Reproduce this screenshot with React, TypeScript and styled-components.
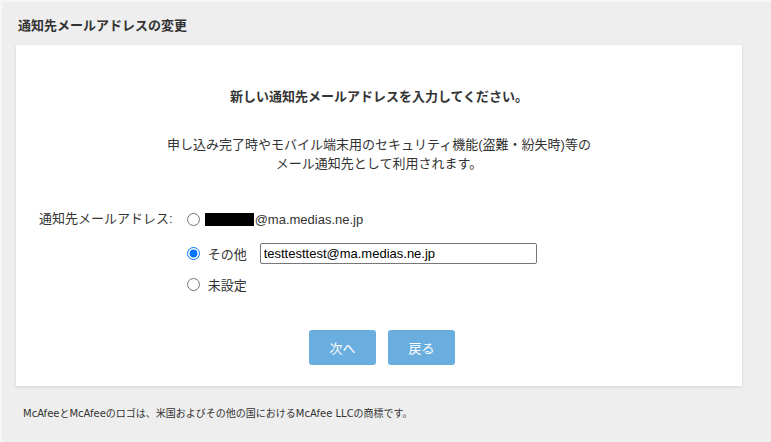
import styled, { createGlobalStyle } from "styled-components";

const GlobalStyle = createGlobalStyle`
  html, body {
    margin: 0;
    padding: 0;
    background: #eeeeee;
  }
  body {
    font-family: "Liberation Sans", "Noto Sans CJK JP", sans-serif;
    color: #333333;
  }
`;

const Page = styled.div`
  width: 771px;
  height: 442px;
  box-sizing: border-box;
  border-top: 2px solid #f6f6f6;
  border-left: 2px solid #f6f6f6;
  padding: 15px 29px 0 14px;
  display: flex;
  flex-direction: column;
`;

const Title = styled.h1`
  margin: 0 0 0 2px;
  height: 28px;
  font-size: 13px;
  font-weight: bold;
  line-height: 18px;
  color: #333;
`;

const Card = styled.div`
  background: #ffffff;
  height: 341px;
  box-sizing: border-box;
  box-shadow: 0 1px 3px rgba(0, 0, 0, 0.12);
  padding: 43px 0 0;
  display: flex;
  flex-direction: column;
  align-items: center;
`;

const Heading = styled.p`
  margin: 0;
  font-size: 13px;
  font-weight: bold;
  line-height: 18px;
`;

const Description = styled.p`
  margin: 29px 0 0;
  font-size: 13px;
  line-height: 19px;
  text-align: center;
`;

const Form = styled.div`
  align-self: stretch;
  margin-top: 36px;
  padding-left: 23px;
  display: grid;
  grid-template-columns: auto 1fr;
  column-gap: 14px;
`;

const Label = styled.div`
  font-size: 13px;
  line-height: 20px;
  height: 20px;
  text-align: right;
`;

const Options = styled.div`
  display: flex;
  flex-direction: column;
  gap: 11px;
`;

const Option = styled.label<{ $gap?: number; $top?: number }>`
  display: flex;
  align-items: center;
  height: 20px;
  font-size: 13px;
  gap: ${(p) => p.$gap ?? 8}px;
  margin-top: ${(p) => p.$top ?? 0}px;
`;

const Radio = styled.input`
  margin: 0;
  width: 13px;
  height: 13px;
  accent-color: #0075ff;
`;

const Masked = styled.span`
  display: inline-block;
  width: 49px;
  height: 13px;
  background: #000;
  margin-left: 4px;
`;

const TextInput = styled.input`
  margin-left: 5px;
  width: 277px;
  height: 21px;
  box-sizing: border-box;
  border: 1px solid #767676;
  border-radius: 2px;
  padding: 0 3px;
  font-family: "Liberation Sans", Arial, sans-serif;
  font-size: 13px;
  color: #000;
`;

const Buttons = styled.div`
  margin-top: 36px;
  padding-left: 6px;
  display: flex;
  gap: 12px;
`;

const Button = styled.button`
  width: 67px;
  height: 35px;
  border: none;
  border-radius: 3px;
  background: #6aaee0;
  color: #ffffff;
  font-family: "Noto Sans CJK JP", sans-serif;
  font-size: 13px;
  cursor: pointer;
`;

const Footer = styled.p`
  margin: 21px 0 0 7px;
  font-size: 10px;
  line-height: 14px;
  font-family: "DejaVu Sans", "Noto Sans CJK JP", sans-serif;
`;

export default function App() {
  return (
    <>
      <GlobalStyle />
      <Page>
        <Title>通知先メールアドレスの変更</Title>
        <Card>
          <Heading>新しい通知先メールアドレスを入力してください。</Heading>
          <Description>
            申し込み完了時やモバイル端末用のセキュリティ機能(盗難・紛失時)等の
            <br />
            メール通知先として利用されます。
          </Description>
          <Form>
            <Label>通知先メールアドレス:</Label>
            <Options>
              <Option $gap={1}>
                <Radio type="radio" name="addr" />
                <Masked />
                <span>@ma.medias.ne.jp</span>
              </Option>
              <Option $top={3}>
                <Radio type="radio" name="addr" defaultChecked />
                <span>その他</span>
                <TextInput defaultValue="testtesttest@ma.medias.ne.jp" />
              </Option>
              <Option>
                <Radio type="radio" name="addr" />
                <span>未設定</span>
              </Option>
            </Options>
          </Form>
          <Buttons>
            <Button>次へ</Button>
            <Button>戻る</Button>
          </Buttons>
        </Card>
        <Footer>
          McAfeeとMcAfeeのロゴは、米国およびその他の国におけるMcAfee LLCの商標です。
        </Footer>
      </Page>
    </>
  );
}
